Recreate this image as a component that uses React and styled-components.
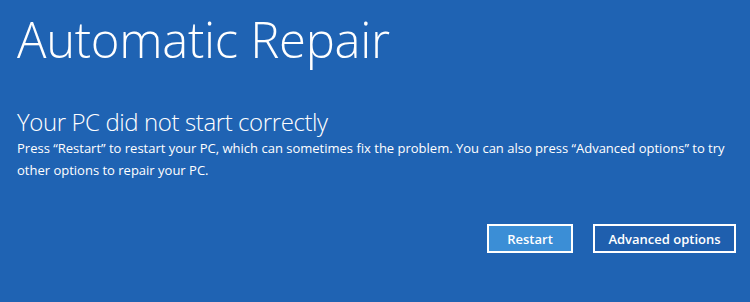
import React from 'react'
import styled, { createGlobalStyle } from 'styled-components'

const GlobalStyle = createGlobalStyle`
  html, body {
    margin: 0;
    padding: 0;
    background: #1f63b3;
  }
  * { box-sizing: border-box; }
`

const Screen = styled.div`
  width: 750px;
  height: 302px;
  background: #1f63b3;
  color: #ffffff;
  font-family: "Open Sans", "Noto Sans", sans-serif;
  padding: 7px 14px 0 17px;
  display: flex;
  flex-direction: column;
`

const Title = styled.h1`
  margin: 0;
  font-size: 49px;
  font-weight: 300;
  line-height: 64px;
  letter-spacing: -0.3px;
`

const Subtitle = styled.h2`
  margin: 36px 0 0;
  font-size: 24px;
  font-weight: 300;
  line-height: 30px;
  letter-spacing: -0.4px;
`

const Message = styled.p`
  margin: 0;
  font-size: 13px;
  line-height: 22px;
  letter-spacing: 0;
  max-width: 720px;
`

const Actions = styled.div`
  display: flex;
  justify-content: flex-end;
  gap: 20px;
  margin-top: 43px;
`

const Button = styled.button`
  height: 29px;
  min-width: ${p => (p.$primary ? '86px' : '143px')};
  padding: 0 12px;
  border: 2px solid #ffffff;
  background: ${p => (p.$primary ? '#3b8ed6' : '#1f5fae')};
  color: #ffffff;
  font-family: "Open Sans", "Noto Sans", sans-serif;
  font-size: 13px;
  font-weight: 600;
  cursor: pointer;
`

export default function App() {
  return (
    <>
      <GlobalStyle />
      <Screen>
        <Title>Automatic Repair</Title>
        <Subtitle>Your PC did not start correctly</Subtitle>
        <Message>
          Press “Restart” to restart your PC, which can sometimes fix the problem. You can also press “Advanced options” to try other options to repair your PC.
        </Message>
        <Actions>
          <Button $primary>Restart</Button>
          <Button>Advanced options</Button>
        </Actions>
      </Screen>
    </>
  )
}
